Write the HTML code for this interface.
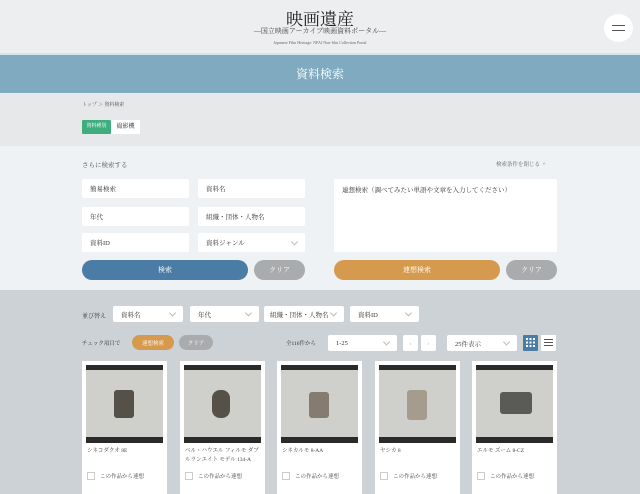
<!DOCTYPE html><html><head><meta charset="utf-8"><style>
*{box-sizing:border-box;margin:0;padding:0}
body{width:640px;height:494px;overflow:hidden;font-family:"Liberation Serif","Noto Serif CJK SC",serif;color:#333;background:#cdd2d6;position:relative;font-size:7px}
.a{position:absolute}
.in{position:absolute;background:#fff;border-radius:2px;font-size:6.5px;padding-left:8px;display:flex;align-items:center;color:#333}
.sel::after{content:"";position:absolute;right:8px;top:50%;width:4px;height:4px;border-right:1px solid #bbb;border-bottom:1px solid #bbb;transform:translateY(-70%) rotate(45deg)}
.btn{position:absolute;border-radius:10px;color:#fff;font-size:7px;display:flex;align-items:center;justify-content:center}
.card{position:absolute;top:361px;width:85px;height:133px;background:#fff}
.ph{position:absolute;left:4px;top:4px;width:77px;height:78px;background:#cfd0cc;border-top:5px solid #2a2a2a;border-bottom:6px solid #2a2a2a}
.cam{position:absolute;left:28px;top:20px;width:20px;height:28px;background:#555048;border-radius:3px}
.ct{position:absolute;left:5px;top:86px;font-size:5.5px;line-height:9px;color:#444;width:76px}
.cb{position:absolute;left:5px;top:111px;font-size:5.5px;color:#444;display:flex;align-items:center;gap:5px}
.cb i{display:inline-block;width:8px;height:8px;border:1px solid #ccc}
</style></head><body>
<div class="a" style="left:0;top:0;width:640px;height:53px;background:#eceeef"></div>
<div class="a" style="left:0;top:5px;width:640px;text-align:center;font-size:17px;color:#222">映画遺産</div>
<div class="a" style="left:0;top:26px;width:640px;text-align:center;font-size:7px;color:#444">—国立映画アーカイブ映画資料ポータル—</div>
<div class="a" style="left:0;top:40px;width:640px;text-align:center;font-size:4px;color:#666">Japanese Film Heritage: NFAJ Non-film Collection Portal</div>
<div class="a" style="left:604px;top:14px;width:29px;height:28px;border-radius:50%;background:#fff"></div>
<div class="a" style="left:612px;top:25px;width:13px;height:1px;background:#555"></div>
<div class="a" style="left:612px;top:30px;width:13px;height:1px;background:#555"></div>
<div class="a" style="left:0;top:53px;width:640px;height:2px;background:#d6e4ec"></div>
<div class="a" style="left:0;top:55px;width:640px;height:38px;background:#7faac0;color:#fff;font-size:12px;text-align:center;line-height:38px">資料検索</div>
<div class="a" style="left:0;top:93px;width:640px;height:53px;background:#e6e8e9"></div>
<div class="a" style="left:82px;top:101px;font-size:5px;color:#555">トップ ＞ 資料検索</div>
<div class="a" style="left:82px;top:120px;width:29px;height:14px;background:#3fae7e;color:#fff;font-size:5px;line-height:14px;text-align:center;border-radius:1px">資料種別</div>
<div class="a" style="left:111px;top:120px;width:29px;height:14px;background:#fff;font-size:6px;line-height:14px;text-align:center">撮影機</div>
<div class="a" style="left:0;top:146px;width:640px;height:144px;background:#eef2f4"></div>
<div class="a" style="left:82px;top:160px;font-size:6.5px;color:#555">さらに検索する</div>
<div class="a" style="left:496px;top:160px;font-size:5.5px;color:#666">検索条件を閉じる ＾</div>
<div class="in" style="left:82px;top:179px;width:107px;height:19px">簡易検索</div>
<div class="in" style="left:198px;top:179px;width:107px;height:19px">資料名</div>
<div class="in" style="left:82px;top:207px;width:107px;height:19px">年代</div>
<div class="in" style="left:198px;top:207px;width:107px;height:19px">組織・団体・人物名</div>
<div class="in" style="left:82px;top:233px;width:107px;height:19px">資料ID</div>
<div class="in sel" style="left:198px;top:233px;width:107px;height:19px">資料ジャンル</div>
<div class="in" style="left:334px;top:179px;width:223px;height:73px;align-items:flex-start;padding-top:6px">連想検索（調べてみたい単語や文章を入力してください）</div>
<div class="btn" style="left:82px;top:260px;width:166px;height:20px;background:#4a7ca6">検索</div>
<div class="btn" style="left:254px;top:260px;width:51px;height:20px;background:#a9abad">クリア</div>
<div class="btn" style="left:334px;top:260px;width:166px;height:20px;background:#d69a4e">連想検索</div>
<div class="btn" style="left:506px;top:260px;width:51px;height:20px;background:#a9abad">クリア</div>
<div class="a" style="left:82px;top:311px;font-size:6px">並び替え</div>
<div class="in sel" style="left:113px;top:306px;width:70px;height:16px">資料名</div>
<div class="in sel" style="left:190px;top:306px;width:69px;height:16px">年代</div>
<div class="in sel" style="left:264px;top:306px;width:80px;height:16px;padding-left:6px">組織・団体・人物名</div>
<div class="in sel" style="left:350px;top:306px;width:69px;height:16px">資料ID</div>
<div class="a" style="left:82px;top:339px;font-size:5.5px">チェック項目で</div>
<div class="btn" style="left:132px;top:335px;width:42px;height:15px;background:#d69a4e;font-size:5.5px">連想検索</div>
<div class="btn" style="left:179px;top:335px;width:34px;height:15px;background:#a9abad;font-size:5.5px">クリア</div>
<div class="a" style="left:286px;top:339px;font-size:5.5px">全116件から</div>
<div class="in sel" style="left:328px;top:335px;width:69px;height:16px">1-25</div>
<div class="in" style="left:403px;top:335px;width:15px;height:16px;padding:0;justify-content:center;color:#bbb">‹</div>
<div class="in" style="left:421px;top:335px;width:15px;height:16px;padding:0;justify-content:center;color:#bbb">›</div>
<div class="in sel" style="left:447px;top:335px;width:70px;height:16px">25件表示</div>
<div class="a" style="left:523px;top:335px;width:15px;height:16px;background:#4a7ca6;border-radius:1px"></div>
<div class="a" style="left:526px;top:338px;width:9px;height:9px;background:repeating-linear-gradient(90deg,#fff 0 2px,transparent 2px 3.5px),#4a7ca6;-webkit-mask:repeating-linear-gradient(0deg,#000 0 2px,transparent 2px 3.5px)"></div>
<div class="a" style="left:541px;top:335px;width:15px;height:16px;background:#fff;border-radius:1px"></div>
<div class="a" style="left:544px;top:339px;width:9px;height:7px;border-top:1px solid #555;border-bottom:1px solid #555"></div>
<div class="a" style="left:544px;top:342px;width:9px;height:1px;background:#555"></div>
<div class="card" style="left:82px"><div class="ph"><div class="cam"></div></div><div class="ct">シネコダクオ 8E</div><div class="cb"><i></i>この作品から連想</div></div>
<div class="card" style="left:180px"><div class="ph"><div class="cam" style="width:18px;border-radius:8px"></div></div><div class="ct">ベル・ハウエル フィルモ ダブルランエイト モデル 134-A</div><div class="cb"><i></i>この作品から連想</div></div>
<div class="card" style="left:277px"><div class="ph"><div class="cam" style="background:#857b70;width:20px;height:26px;top:22px"></div></div><div class="ct">シネカルモ 8-AA</div><div class="cb"><i></i>この作品から連想</div></div>
<div class="card" style="left:375px"><div class="ph"><div class="cam" style="background:#a69c8e;width:20px;height:30px"></div></div><div class="ct">ヤシカ 8</div><div class="cb"><i></i>この作品から連想</div></div>
<div class="card" style="left:472px"><div class="ph"><div class="cam" style="background:#5a5a56;width:32px;height:22px;left:24px;top:22px"></div></div><div class="ct">エルモ ズーム 8-CZ</div><div class="cb"><i></i>この作品から連想</div></div>
</body></html>
